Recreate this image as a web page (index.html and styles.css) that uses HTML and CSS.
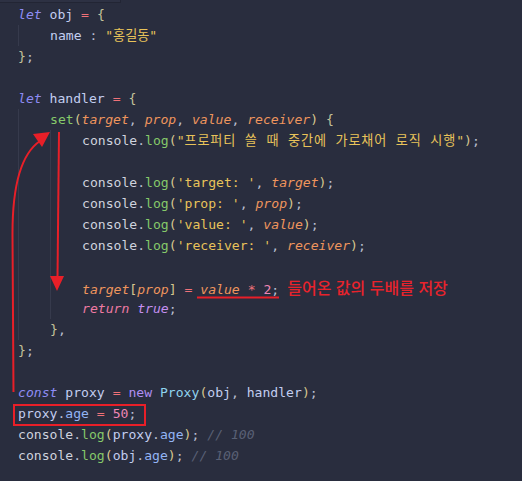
FILE: index.html
```html
<!DOCTYPE html>
<html lang="ko">
<head>
<meta charset="utf-8">
<title>Proxy handler</title>
<link rel="stylesheet" href="styles.css">
</head>
<body>
<div class="editor">
  <div class="tabbar"></div>
  <div class="code">
    <div class="ln"><span class="kw">let</span> <span class="id">obj</span> <span class="op">=</span> <span class="br">{</span></div>
    <div class="indent">
      <div class="ln"><span class="id">name</span> <span class="pl">:</span> <span class="str">"홍길동"</span></div>
    </div>
    <div class="ln"><span class="br">}</span><span class="pl">;</span></div>
    <div class="ln"></div>
    <div class="ln"><span class="kw">let</span> <span class="id">handler</span> <span class="op">=</span> <span class="br">{</span></div>
    <div class="indent">
      <div class="ln"><span class="fn">set</span><span class="pn">(</span><span class="pa">target</span><span class="pl">, </span><span class="pa">prop</span><span class="pl">, </span><span class="pa">value</span><span class="pl">, </span><span class="pa">receiver</span><span class="pn">)</span> <span class="br">{</span></div>
      <div class="indent">
        <div class="ln"><span class="con">console</span><span class="pl">.</span><span class="fn">log</span><span class="pn">(</span><span class="str">"<span class="ko">프로퍼티 쓸 때 중간에 가로채어 로직 시행</span>"</span><span class="pn">)</span><span class="pl">;</span></div>
        <div class="ln"></div>
        <div class="ln"><span class="con">console</span><span class="pl">.</span><span class="fn">log</span><span class="pn">(</span><span class="str">'target: '</span><span class="pl">, </span><span class="pa">target</span><span class="pn">)</span><span class="pl">;</span></div>
        <div class="ln"><span class="con">console</span><span class="pl">.</span><span class="fn">log</span><span class="pn">(</span><span class="str">'prop: '</span><span class="pl">, </span><span class="pa">prop</span><span class="pn">)</span><span class="pl">;</span></div>
        <div class="ln"><span class="con">console</span><span class="pl">.</span><span class="fn">log</span><span class="pn">(</span><span class="str">'value: '</span><span class="pl">, </span><span class="pa">value</span><span class="pn">)</span><span class="pl">;</span></div>
        <div class="ln"><span class="con">console</span><span class="pl">.</span><span class="fn">log</span><span class="pn">(</span><span class="str">'receiver: '</span><span class="pl">, </span><span class="pa">receiver</span><span class="pn">)</span><span class="pl">;</span></div>
        <div class="ln"></div>
        <div class="ln"><span class="pa">target</span><span class="pn">[</span><span class="pa">prop</span><span class="pn">]</span> <span class="op">=</span> <span class="pa">value</span> <span class="op2">*</span> <span class="num">2</span><span class="pl">;</span><span class="note">들어온 값의 두배를 저장</span></div>
        <div class="ln"><span class="ret">return</span> <span class="bool">true</span><span class="pl">;</span></div>
      </div>
      <div class="ln"><span class="br">}</span><span class="pl">,</span></div>
    </div>
    <div class="ln"><span class="br">}</span><span class="pl">;</span></div>
    <div class="ln"></div>
    <div class="ln"><span class="kw">const</span> <span class="id">proxy</span> <span class="op">=</span> <span class="kw2">new</span> <span class="cls">Proxy</span><span class="pn">(</span><span class="id">obj</span><span class="pl">, </span><span class="id">handler</span><span class="pn">)</span><span class="pl">;</span></div>
    <div class="ln"><span class="id">proxy</span><span class="pl">.</span><span class="pr">age</span> <span class="op">=</span> <span class="num">50</span><span class="pl">;</span></div>
    <div class="ln"><span class="con">console</span><span class="pl">.</span><span class="fn">log</span><span class="pn">(</span><span class="id">proxy</span><span class="pl">.</span><span class="pr">age</span><span class="pn">)</span><span class="pl">;</span> <span class="cm">// 100</span></div>
    <div class="ln"><span class="con">console</span><span class="pl">.</span><span class="fn">log</span><span class="pn">(</span><span class="id">obj</span><span class="pl">.</span><span class="pr">age</span><span class="pn">)</span><span class="pl">;</span> <span class="cm">// 100</span></div>
  </div>
  <svg class="marks" width="522" height="481" viewBox="0 0 522 481" aria-hidden="true">
    <path d="M13.5 392 L12.5 236 Q12 160 40 141" fill="none" stroke="#e81f28" stroke-width="2"/>
    <polygon points="50,132 33,134 42,147" fill="#e81f28"/>
    <path d="M59 132 L57.5 278" fill="none" stroke="#e81f28" stroke-width="2"/>
    <polygon points="50,276 64,276 57,291" fill="#e81f28"/>
    <line x1="197" y1="297.5" x2="279" y2="297.5" stroke="#e81f28" stroke-width="2"/>
    <rect x="14" y="405" width="131" height="20" fill="none" stroke="#e81f28" stroke-width="2"/>
  </svg>
</div>
</body>
</html>
```
FILE: styles.css
```css
html, body {
  margin: 0;
  padding: 0;
  background: #292d3e;
}
.editor {
  position: relative;
  width: 522px;
  height: 481px;
  overflow: hidden;
  background: #292d3e;
}
.tabbar {
  width: 120px;
  height: 2px;
  background: #2d3143;
  border-right: 1px solid #222534;
  border-bottom: 1px solid #222534;
}
.code {
  padding: 0 0 0 18px;
  margin-top: 1px;
  font-family: "DejaVu Sans Mono", "Noto Sans CJK KR", monospace;
  font-size: 13.1px;
  line-height: 21px;
  color: #c9d0e6;
}
.ln {
  height: 21px;
  white-space: pre;
}
.indent {
  border-left: 1px solid #363a4c;
  padding-left: 31px;
}
.ko { letter-spacing: 0.85px; }
.kw { color: #8e8cf3; font-style: italic; }
.kw2 { color: #b08df2; }
.id { color: #c3cdf0; }
.con { color: #cfd3de; }
.op { color: #f07178; }
.op2 { color: #f07178; font-style: italic; }
.br { color: #c4c39a; }
.pl { color: #b8bdcf; }
.pn { color: #d6c68e; }
.fn { color: #86c96a; }
.pa { color: #ef955d; font-style: italic; }
.str { color: #e8c35a; }
.num { color: #ef86b4; }
.cls { color: #8fd3ee; }
.pr { color: #93b4f4; }
.ret { color: #ee7aa3; font-style: italic; }
.bool { color: #c48ff0; font-style: italic; }
.cm { color: #596075; font-style: italic; }
.note {
  font-family: "Noto Sans CJK KR", sans-serif;
  font-size: 16px;
  font-weight: 500;
  color: #e8232c;
  margin-left: 8px;
}
.marks {
  position: absolute;
  top: 0;
  left: 0;
  pointer-events: none;
}
```
